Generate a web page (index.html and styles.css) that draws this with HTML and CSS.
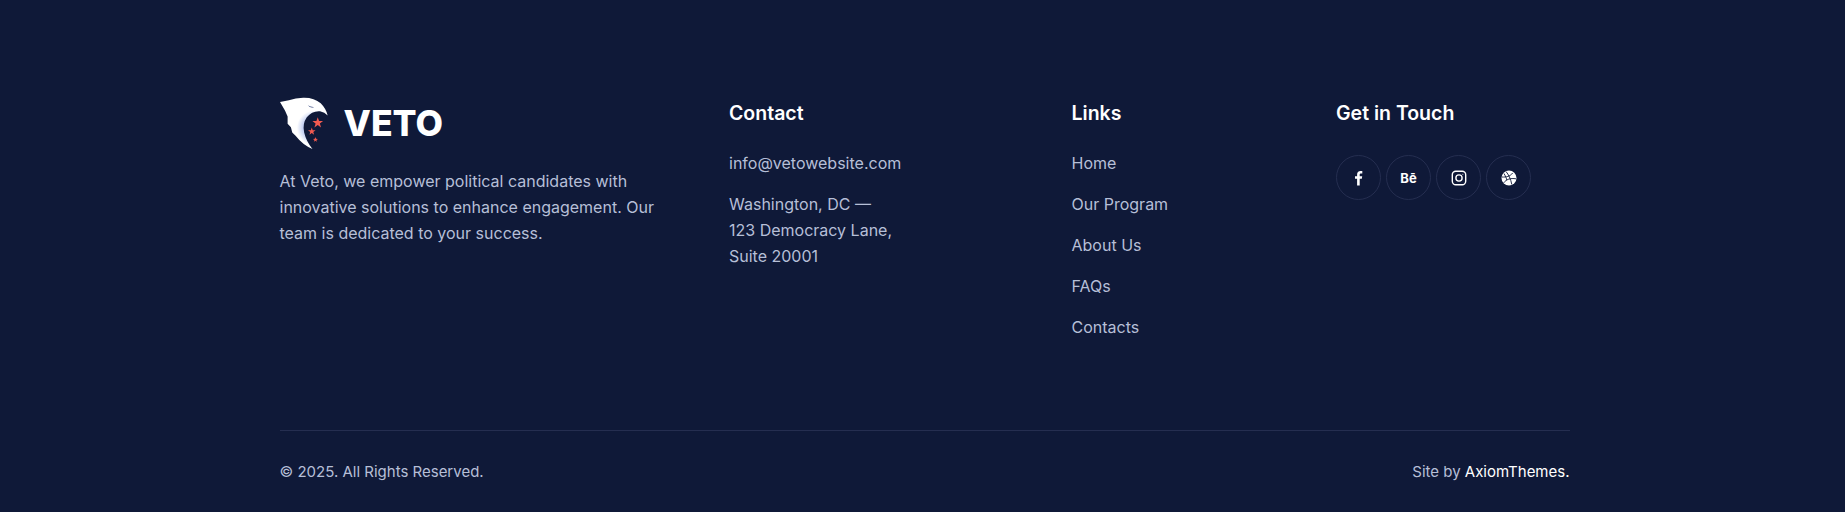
FILE: index.html
```html
<!doctype html>
<html lang="en">
	<head>
		<title>Veto - Footer</title>
		<link rel="stylesheet" href="styles.css">
	</head>
	<body>
		<footer class="footer">
			<div class="footer-top">
				<div class="about">
					<div class="logo">
						<svg class="logo-mark" viewBox="15 15 145 160" width="48" height="53">
							<defs>
								<radialGradient id="wing" gradientUnits="userSpaceOnUse" cx="118" cy="108" r="52">
									<stop offset=".5" stop-color="#a9bbec"/>
									<stop offset="1" stop-color="#ffffff"/>
								</radialGradient>
								<polygon id="star" points="0,-1 .235,-.324 .951,-.309 .38,.124 .588,.809 0,.4 -.588,.809 -.38,.124 -.951,-.309 -.235,-.324"/>
							</defs>
							<path fill="url(#wing)" d="M15 30 L42 25 Q62 17 85 17 Q118 16 138 34 Q154 50 159 71 Q150 61 136 58 Q112 56 96 76 Q82 96 88 122 Q94 148 113 172 Q84 160 62 132 L52 122 L48 106 L38 96 L38 74 L30 56 Z"/>
							<path fill="#34467e" d="M99 40 Q108 46 118 45 Q108 50 99 40 Z"/>
							<g fill="#f25a50">
								<use href="#star" transform="translate(129 93) scale(17)"/>
								<use href="#star" transform="translate(111 119) scale(12)"/>
								<use href="#star" transform="translate(122 144) scale(8)"/>
							</g>
						</svg>
						<span class="logo-name">VETO</span>
					</div>
					<p class="about-text">At Veto, we empower political candidates with innovative solutions to enhance engagement. Our team is dedicated to your success.</p>
				</div>
				<div class="contact">
					<h4>Contact</h4>
					<p><a href="#">info@vetowebsite.com</a></p>
					<p>Washington, DC —<br>123 Democracy Lane,<br>Suite 20001</p>
				</div>
				<div class="links">
					<h4>Links</h4>
					<ul>
						<li><a href="#">Home</a></li>
						<li><a href="#">Our Program</a></li>
						<li><a href="#">About Us</a></li>
						<li><a href="#">FAQs</a></li>
						<li><a href="#">Contacts</a></li>
					</ul>
				</div>
				<div class="touch">
					<h4>Get in Touch</h4>
					<div class="socials">
						<a class="social" href="#">
							<svg viewBox="0 0 16 16" width="16" height="16"><path fill="#fff" d="M6.100 15.500V8.800H4V6.300h2.100V4.500C6.100 2.300 7.400 1 9.400 1c.9 0 1.700.1 1.900.1v2.300H10c-1 0-1.300.6-1.300 1.300v1.600h2.500l-.4 2.500H8.700v6.700z"/></svg>
						</a>
						<a class="social social-be" href="#">Bē</a>
						<a class="social" href="#">
							<svg viewBox="0 0 16 16" width="16" height="16" fill="none" stroke="#fff"><rect x="1.300" y="1.300" width="13.400" height="13.400" rx="3.500" stroke-width="1.400"/><circle cx="8" cy="8" r="3.100" stroke-width="1.400"/><circle cx="11.800" cy="4.200" r=".5" fill="#fff" stroke="none"/></svg>
						</a>
						<a class="social" href="#">
							<svg viewBox="0 0 16 16" width="16" height="16"><circle cx="8" cy="8" r="7.500" fill="#fff"/><path fill="none" stroke="#0f1938" stroke-width=".9" d="M5 1.500c2.500 3 4.800 7.500 5.800 13M1 7c4 .3 8-.5 10.700-4M2.800 12.800C5 9.500 9.500 7.800 15 8.800M3 3.500c2 3.500 2.500 5 2.800 6.500"/></svg>
						</a>
					</div>
				</div>
			</div>
			<div class="footer-bottom">
				<span>© 2025. All Rights Reserved.</span>
				<span>Site by <a class="credit" href="#">AxiomThemes.</a></span>
			</div>
		</footer>
	</body>
</html>
```

FILE: styles.css
```css
html, body {
	margin: 0;
	padding: 0;
	height: 512px;
	background-color: #0f1938;
}

body {
	font-family: Inter, "Liberation Sans", sans-serif;
	font-size: 16px;
	line-height: 26px;
	color: #b6bfd7;
	overflow: hidden;
}

a {
	color: inherit;
	text-decoration: none;
}

.footer {
	width: 1290px;
	margin-left: 279.5px;
	padding-top: 97px;
}

.footer-top {
	display: grid;
	grid-template-columns: 449.5px 342.5px 264.5px 1fr;
	height: 333px;
}

.logo {
	display: flex;
	align-items: center;
	gap: 16px;
	height: 53px;
}

.logo-mark {
	display: block;
}

.logo-name {
	font-size: 35.6px;
	line-height: 51px;
	font-weight: 800;
	color: #fff;
}

.about-text {
	margin: 18px 0 0;
	width: 390px;
}

h4 {
	margin: 3px 0 24px;
	font-size: 19.5px;
	line-height: 26px;
	font-weight: 600;
	color: #fff;
}

.contact p {
	margin: 0 0 15px;
}

.links ul {
	list-style: none;
	margin: 0;
	padding: 0;
	display: flex;
	flex-direction: column;
	gap: 15px;
}

.socials {
	display: flex;
	gap: 5px;
	margin-top: 29px;
}

.social {
	box-sizing: border-box;
	width: 45px;
	height: 45px;
	border: 1px solid #252e50;
	border-radius: 50%;
	display: flex;
	align-items: center;
	justify-content: center;
}

.social-be {
	font-size: 13px;
	font-weight: 700;
	color: #fff;
}

.footer-bottom {
	display: flex;
	justify-content: space-between;
	border-top: 1px solid #252e50;
	padding-top: 28px;
	font-size: 15px;
}

.credit {
	color: #fff;
}
```
